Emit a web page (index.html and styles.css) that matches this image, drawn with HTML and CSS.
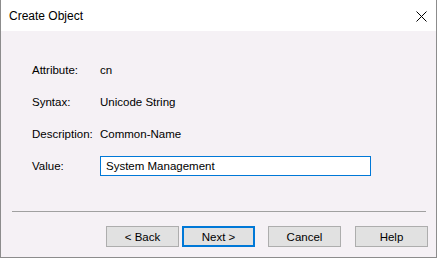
FILE: index.html
```html
<!DOCTYPE html>
<html lang="en">
<head>
    <meta charset="UTF-8">
    <meta name="viewport" content="width=device-width, initial-scale=1.0">
    <title>Create Object</title>
    <link rel="stylesheet" href="styles.css">
</head>
<body>
    <div class="window">
        <div class="titlebar">
            <span class="title">Create Object</span>
            <span class="close">
                <svg width="11" height="11" viewBox="0 0 11 11">
                    <path d="M0.5 0.5 L10.5 10.5 M10.5 0.5 L0.5 10.5" stroke="#000" stroke-width="1" fill="none"/>
                </svg>
            </span>
        </div>
        <div class="content">
            <div class="fields">
                <div class="row">
                    <span class="label">Attribute:</span>
                    <span class="value">cn</span>
                </div>
                <div class="row">
                    <span class="label">Syntax:</span>
                    <span class="value">Unicode String</span>
                </div>
                <div class="row">
                    <span class="label">Description:</span>
                    <span class="value">Common-Name</span>
                </div>
                <div class="row row-input">
                    <span class="label">Value:</span>
                    <input type="text" class="text-input" value="System Management">
                </div>
            </div>
            <hr class="separator">
            <div class="buttons">
                <button class="btn">&lt; Back</button>
                <button class="btn btn-default">Next &gt;</button>
                <button class="btn btn-gap">Cancel</button>
                <button class="btn btn-gap2">Help</button>
            </div>
        </div>
    </div>
</body>
</html>
```

FILE: styles.css
```css
html, body {
    margin: 0;
    padding: 0;
}

body {
    font-family: "Liberation Sans", Arial, sans-serif;
    font-size: 12px;
    color: #000;
    width: 437px;
    height: 258px;
    overflow: hidden;
}

.window {
    box-sizing: border-box;
    width: 437px;
    height: 258px;
    border: 1px solid #8c8c8c;
    border-top: none;
    background: #f5f1f5;
    display: flex;
    flex-direction: column;
}

.titlebar {
    height: 31px;
    background: #fff;
    display: flex;
    align-items: center;
    justify-content: space-between;
    padding: 0 9px 0 8px;
}

.title {
    font-size: 12px;
    padding-top: 1px;
}

.close {
    display: flex;
    padding-top: 1px;
}

.content {
    flex: 1;
    display: flex;
    flex-direction: column;
}

.fields {
    padding: 32px 0 0 31px;
    display: flex;
    flex-direction: column;
    gap: 18px;
}

.row {
    display: flex;
    align-items: center;
    height: 14px;
}

.label {
    width: 68px;
    font-size: 11.5px;
}

.value {
    font-size: 11.5px;
}

.row-input {
    height: 20px;
    margin-top: -3px;
}

.text-input {
    box-sizing: border-box;
    width: 271px;
    height: 20px;
    margin: 0;
    padding: 0 5px;
    border: 1px solid #0078d7;
    background: #fff;
    font-family: "Liberation Sans", Arial, sans-serif;
    font-size: 11.5px;
    color: #000;
    outline: none;
}

.separator {
    margin: 35px 10px 0 11px;
    border: none;
    border-top: 1px solid #a0a0a0;
    height: 0;
}

.buttons {
    display: flex;
    padding: 14px 0 0 105px;
    gap: 3px;
}

.btn {
    box-sizing: border-box;
    width: 73px;
    height: 21px;
    margin: 0;
    padding: 0;
    background: #e1e1e1;
    border: 1px solid #adadad;
    font-family: "Liberation Sans", Arial, sans-serif;
    font-size: 11.5px;
    color: #000;
}

.btn-default {
    border: 2px solid #0078d7;
}

.btn-gap {
    margin-left: 10px;
}

.btn-gap2 {
    margin-left: 11px;
}
```
